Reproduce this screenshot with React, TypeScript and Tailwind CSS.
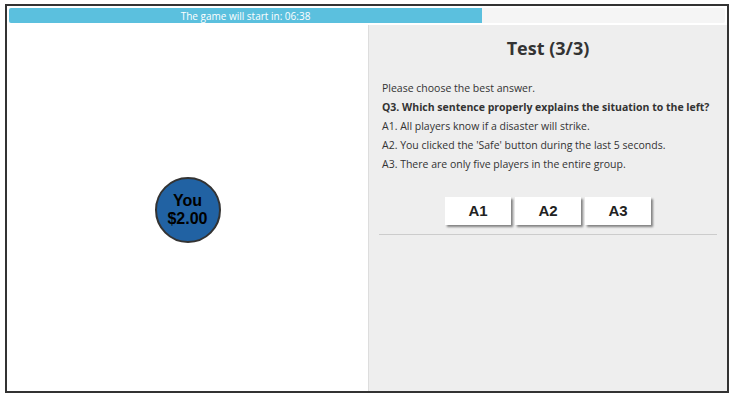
import React from "react";

export default function App() {
  const font = { fontFamily: '"Open Sans", "Liberation Sans", sans-serif' };
  return (
    <div className="w-[741px] h-[413px] bg-white" style={font}>
      <div className="ml-[5px] mt-[4px] w-[724px] h-[389px] border-2 border-[#333] flex flex-col">
        <div className="mx-[2px] mt-[2px] h-[15px] rounded-[2px] bg-[#f5f5f5] flex overflow-hidden">
          <div className="w-[473px] h-full bg-[#5bc0de] flex items-center justify-center text-white text-[10px] leading-none">
            The game will start in: 06:38
          </div>
        </div>
        <div className="flex flex-1 mt-[2px]">
          <div className="w-[361px] flex items-center justify-center">
            <div
              className="w-[66px] h-[66px] rounded-full bg-[#2162a3] border-2 border-[#333] flex flex-col items-center justify-center text-black font-bold text-[16px] leading-[18px] mt-[4px]"
              style={{ fontFamily: '"Liberation Sans", Arial, sans-serif' }}
            >
              <span>You</span>
              <span>$2.00</span>
            </div>
          </div>
          <div className="flex-1 bg-[#eeeeee] border-l border-[#dddddd] px-[10px]">
            <h1 className="text-center font-bold text-[18px] text-[#333] mt-[10px] leading-[26px]">Test (3/3)</h1>
            <div className="mt-[18px] px-[3px] text-[10.5px] text-[#333] leading-[19px]">
              <p>Please choose the best answer.</p>
              <p className="font-bold whitespace-nowrap">Q3. Which sentence properly explains the situation to the left?</p>
              <p>A1. All players know if a disaster will strike.</p>
              <p>A2. You clicked the 'Safe' button during the last 5 seconds.</p>
              <p>A3. There are only five players in the entire group.</p>
            </div>
            <div className="flex justify-center gap-[4px] mt-[23px]">
              {["A1", "A2", "A3"].map((a) => (
                <button
                  key={a}
                  className="w-[66px] h-[28px] bg-white font-bold text-[15px] text-[#222] shadow-[2px_2px_2px_rgba(0,0,0,0.45)]"
                  style={{ fontFamily: '"Liberation Sans", Arial, sans-serif' }}
                >
                  {a}
                </button>
              ))}
            </div>
            <div className="mt-[9px] h-px bg-[#cccccc]" />
          </div>
        </div>
      </div>
    </div>
  );
}
